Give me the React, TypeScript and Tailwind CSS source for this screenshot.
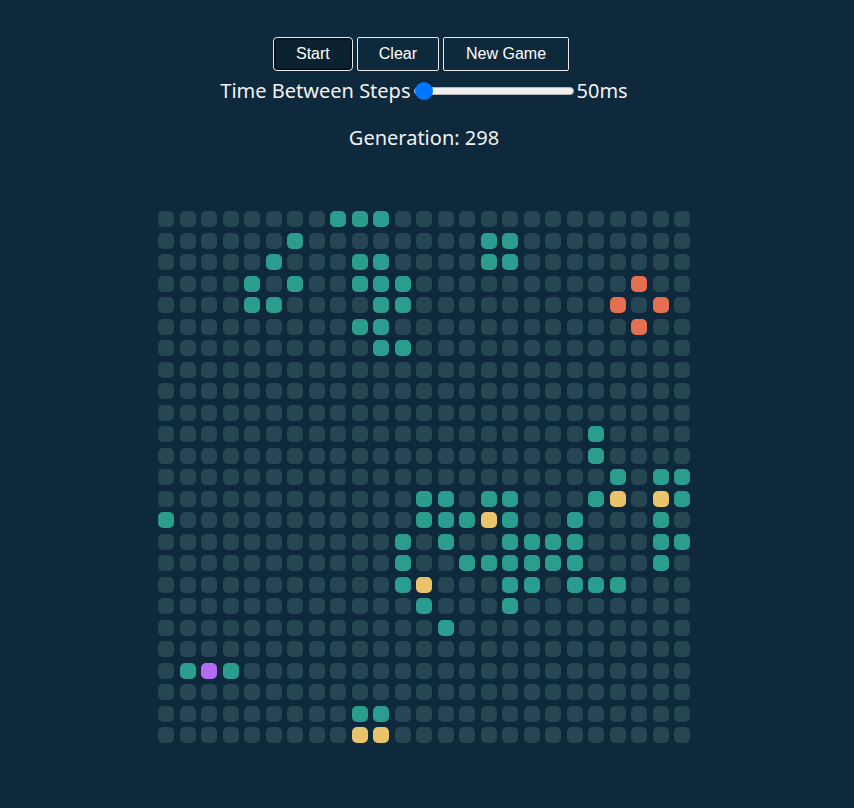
import { useState } from "react";

// t = teal, y = yellow, o = orange, p = purple, . = dead
const BOARD = [
  "........ttt..............",
  "......t........tt........",
  ".....t...tt....tt........",
  "....t.t..ttt..........o..",
  "....tt....tt.........o.o.",
  ".........tt...........o..",
  "..........tt.............",
  ".........................",
  ".........................",
  ".........................",
  "....................t....",
  "....................t....",
  ".....................t.tt",
  "............tt.tt...ty.yt",
  "t...........tttyt..t...t.",
  "...........t.t..tttt...tt",
  "...........t..tttttt...t.",
  "...........ty...tt.ttt...",
  "............t...t........",
  ".............t...........",
  ".........................",
  ".tpt.....................",
  ".........................",
  ".........tt..............",
  ".........yy..............",
];

const cellColor: Record<string, string> = {
  ".": "bg-[#264653]",
  t: "bg-[#2a9d8f]",
  y: "bg-[#e9c46a]",
  o: "bg-[#e76f51]",
  p: "bg-[#b46af2]",
};

export default function App() {
  const [speed, setSpeed] = useState(50);
  const generation = 298;

  return (
    <div className="min-h-screen bg-[#0e293b] pr-[6px] pt-[37px] text-[#f2f2f2] font-['Noto_Sans',sans-serif]">
      <div className="flex flex-col items-center">
        <div className="flex gap-[4px] pr-[6px] font-['Liberation_Sans',Arial,sans-serif] text-[16px] leading-[18px]">
          <button className="rounded-[4px] border border-[#e8e8e8] bg-[#0b2231] px-[22px] py-[7px] text-white shadow-[inset_0_0_0_1.5px_#050d12]">
            Start
          </button>
          <button className="rounded-[2px] border border-[#e8e8e8] px-[21px] py-[7px] text-white">Clear</button>
          <button className="rounded-[2px] border border-[#e8e8e8] px-[22px] py-[7px] text-white">New Game</button>
        </div>

        <div className="mt-[4px] flex items-center text-[20px] leading-[32px]">
          <span>Time Between Steps</span>
          <input
            type="range"
            min={50}
            max={1000}
            value={speed}
            onChange={(event) => setSpeed(Number(event.target.value))}
            className="mx-[3px] h-[8px] w-[160px] cursor-pointer appearance-none rounded-full border border-[#b5b5b5] bg-[#efefef] [&::-webkit-slider-thumb]:h-[18px] [&::-webkit-slider-thumb]:w-[18px] [&::-webkit-slider-thumb]:appearance-none [&::-webkit-slider-thumb]:rounded-full [&::-webkit-slider-thumb]:bg-[#0075ff]"
          />
          <span>{speed}ms</span>
        </div>

        <p className="mt-[15px] text-[20px] leading-[32px]">Generation: {generation}</p>

        <div className="mt-[57px] grid grid-cols-[repeat(25,16px)] gap-[5.5px]">
          {BOARD.flatMap((row, r) =>
            row.split("").map((cell, c) => (
              <div key={`${r}-${c}`} className={`h-[16px] w-[16px] rounded-[5px] ${cellColor[cell]}`} />
            )),
          )}
        </div>
      </div>
    </div>
  );
}
